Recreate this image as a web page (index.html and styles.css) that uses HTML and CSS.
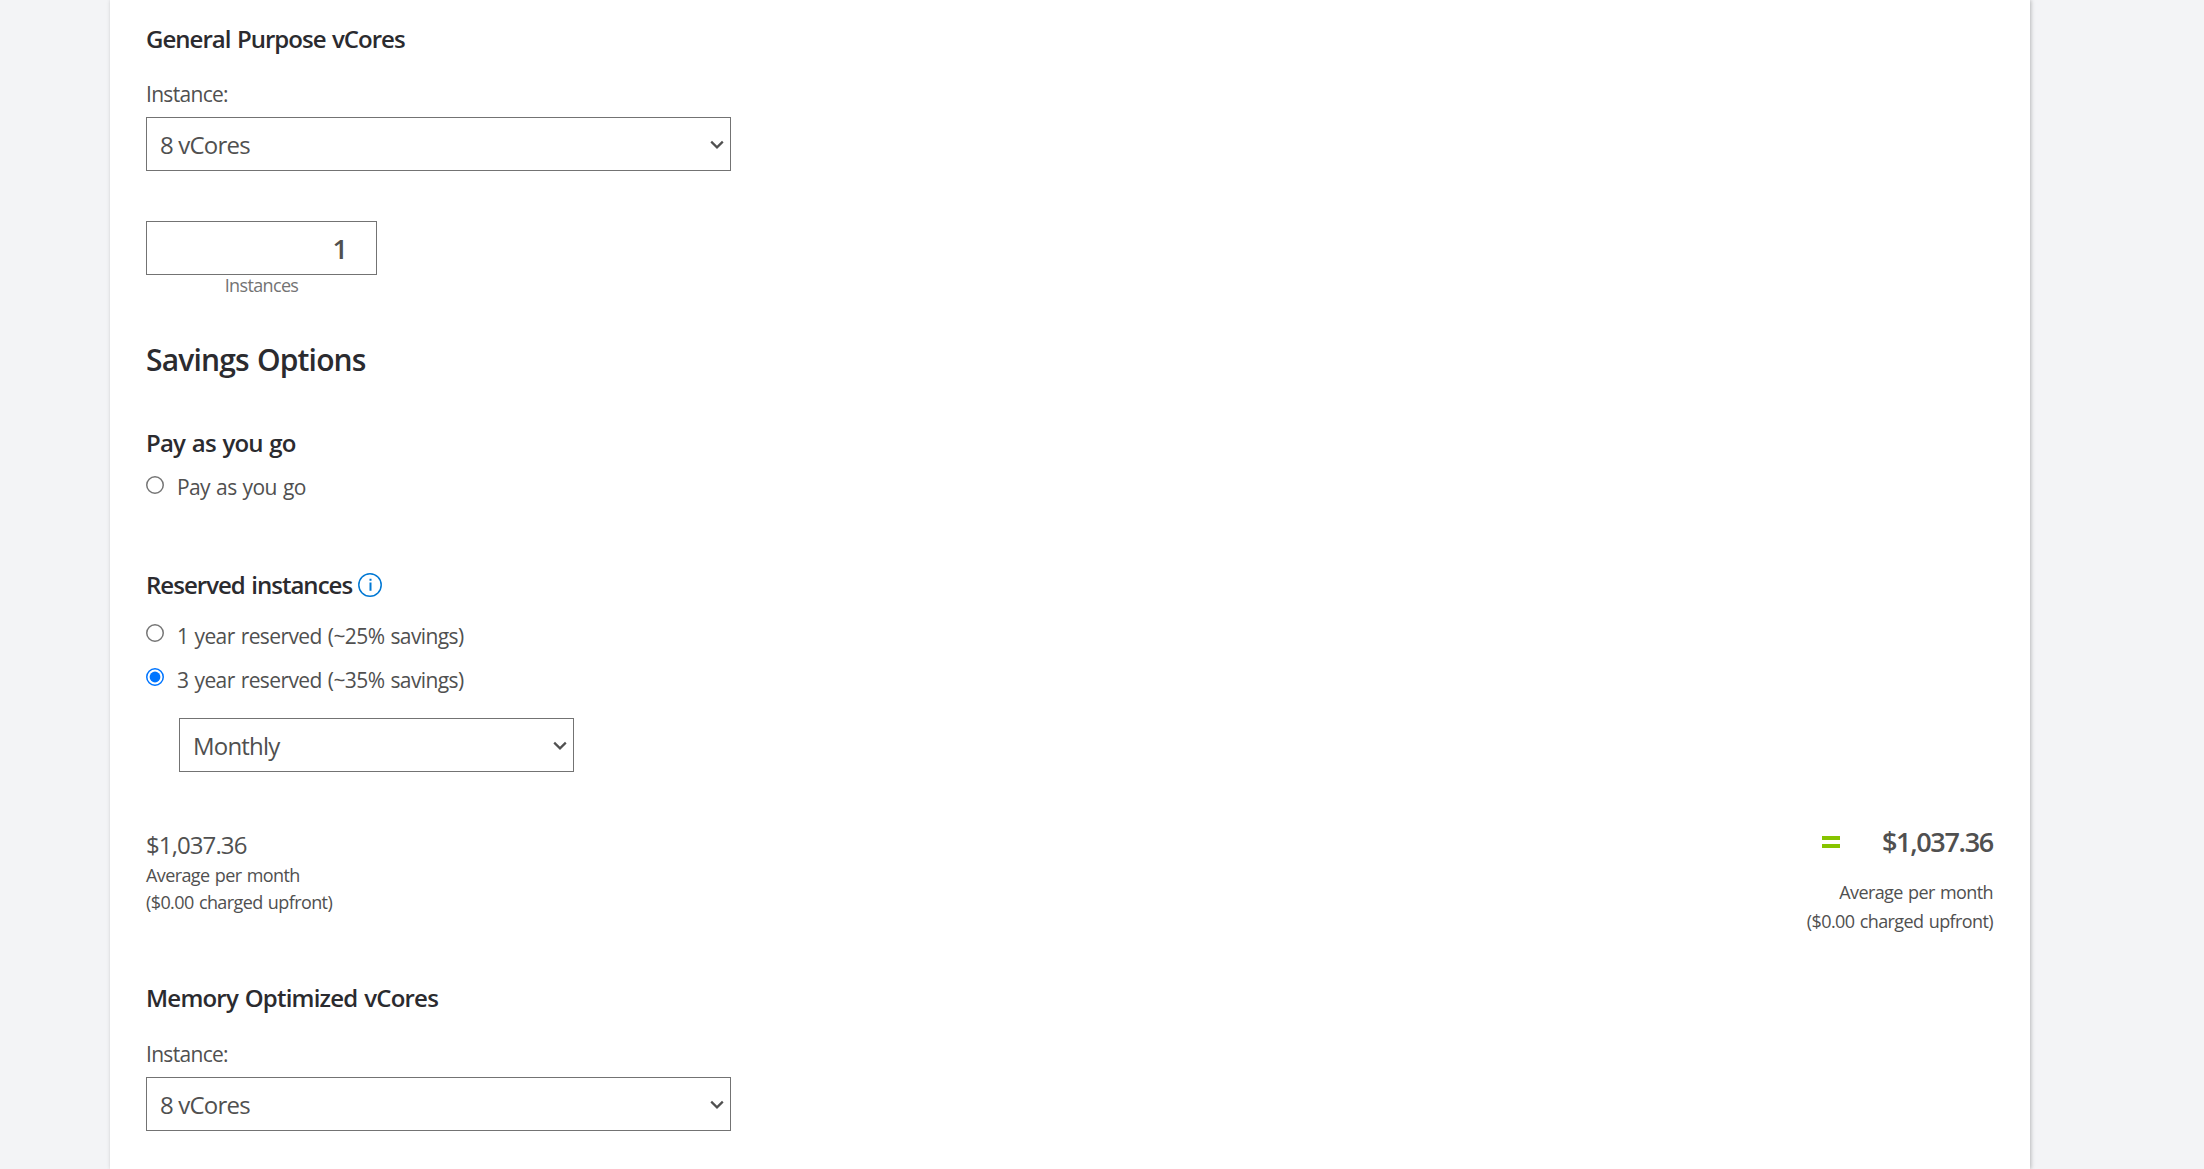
FILE: index.html
```html
<!DOCTYPE html>
<html lang="en">
<head>
    <meta charset="UTF-8">
    <meta name="viewport" content="width=device-width, initial-scale=1.0">
    <title>Pricing Calculator</title>
    <link rel="stylesheet" href="styles.css">
</head>
<body>
    <main class="panel">
        <section class="tier">
            <h3>General Purpose vCores</h3>
            <label class="field-label" for="gpInstance">Instance:</label>
            <div class="select-wrap">
                <select id="gpInstance">
                    <option>8 vCores</option>
                </select>
                <svg class="chevron" viewBox="0 0 14 10" fill="none" stroke="currentColor" stroke-width="2.2">
                    <path d="M1.2 1.6L7 7.4l5.8-5.8"></path>
                </svg>
            </div>

            <div class="quantity">
                <input type="text" id="gpCount" value="1" aria-label="Instances">
                <span class="caption">Instances</span>
            </div>

            <h2>Savings Options</h2>

            <div class="option-group payg">
                <h3>Pay as you go</h3>
                <label class="option">
                    <input type="radio" name="savings">
                    <span>Pay as you go</span>
                </label>
            </div>

            <div class="option-group reserved">
                <h3>
                    <span>Reserved instances</span>
                    <svg class="info" viewBox="0 0 24 24" fill="none" stroke="currentColor" stroke-width="1.5">
                        <circle cx="12" cy="12" r="11.2"></circle>
                        <path stroke-width="2" d="M12.5 9.5v8.3M12.5 5.8v2"></path>
                    </svg>
                </h3>
                <label class="option">
                    <input type="radio" name="savings">
                    <span>1 year reserved (~25% savings)</span>
                </label>
                <label class="option">
                    <input type="radio" name="savings" checked>
                    <span>3 year reserved (~35% savings)</span>
                </label>
                <div class="select-wrap billing">
                    <select id="billing" aria-label="Billing">
                        <option>Monthly</option>
                    </select>
                    <svg class="chevron" viewBox="0 0 14 10" fill="none" stroke="currentColor" stroke-width="2.2">
                        <path d="M1.2 1.6L7 7.4l5.8-5.8"></path>
                    </svg>
                </div>
            </div>

            <div class="summary">
                <div class="cost">
                    <div class="amount">$1,037.36</div>
                    <div class="note">Average per month</div>
                    <div class="note">($0.00 charged upfront)</div>
                </div>
                <div class="total">
                    <div class="total-row">
                        <svg class="equals" viewBox="0 0 18 12" fill="currentColor">
                            <rect width="18" height="4"></rect>
                            <rect y="8" width="18" height="4"></rect>
                        </svg>
                        <span class="total-amount">$1,037.36</span>
                    </div>
                    <div class="note">Average per month</div>
                    <div class="note">($0.00 charged upfront)</div>
                </div>
            </div>
        </section>

        <section class="tier memory">
            <h3>Memory Optimized vCores</h3>
            <label class="field-label" for="moInstance">Instance:</label>
            <div class="select-wrap">
                <select id="moInstance">
                    <option>8 vCores</option>
                </select>
                <svg class="chevron" viewBox="0 0 14 10" fill="none" stroke="currentColor" stroke-width="2.2">
                    <path d="M1.2 1.6L7 7.4l5.8-5.8"></path>
                </svg>
            </div>
        </section>
    </main>
</body>
</html>
```
FILE: styles.css
```css
* {
    margin: 0;
    padding: 0;
    box-sizing: border-box;
}

body {
    background-color: #f3f4f6;
    color: #505050;
    font-family: 'Segoe UI', 'Open Sans', sans-serif;
    font-size: 21px;
    line-height: 30px;
    height: 1169px;
    overflow: hidden;
}

.panel {
    width: 1920px;
    min-height: 1169px;
    margin-left: 110px;
    padding: 21px 37px 37px 36px;
    background-color: white;
    box-shadow: 1px 0 4px rgba(0, 0, 0, 0.25);
}

h2,
h3 {
    color: #2b2b2f;
    font-weight: 600;
}

h2 {
    margin-top: 45px;
    font-size: 30px;
    line-height: 40px;
    letter-spacing: -0.83px;
    word-spacing: 1.2px;
}

h3 {
    display: flex;
    align-items: center;
    font-size: 24px;
    line-height: 36px;
    letter-spacing: -0.98px;
    word-spacing: 1.2px;
}

.memory h3 {
    letter-spacing: -0.78px;
}

.field-label {
    display: block;
    margin: 22px 0 8px;
    letter-spacing: -0.69px;
}

.memory .field-label {
    margin-top: 23px;
}

.select-wrap {
    position: relative;
    width: 585px;
}

select {
    display: block;
    width: 100%;
    height: 54px;
    padding: 1px 40px 0 13px;
    border: 1px solid #737373;
    border-radius: 0;
    background-color: white;
    color: #505050;
    font-family: inherit;
    font-size: 24px;
    letter-spacing: -0.8px;
    appearance: none;
}

.chevron {
    position: absolute;
    top: 23px;
    right: 7px;
    width: 14px;
    height: 10px;
    pointer-events: none;
}

.quantity {
    display: flex;
    flex-direction: column;
    width: 231px;
    margin-top: 50px;
}

.quantity input {
    height: 54px;
    padding: 1px 28px 0 0;
    border: 1px solid #737373;
    color: #505050;
    font-family: inherit;
    font-size: 27px;
    font-weight: 600;
    text-align: right;
}

.caption {
    color: #737373;
    font-size: 18px;
    line-height: 20px;
    letter-spacing: -0.65px;
    text-align: center;
}

.option-group {
    margin-top: 45px;
}

.payg h3 {
    letter-spacing: -0.8px;
}

.option {
    display: flex;
    align-items: flex-start;
    gap: 13px;
    margin-top: 11px;
    letter-spacing: -0.6px;
    word-spacing: 1.2px;
}

.option input {
    width: 12px;
    height: 12px;
    margin-top: 2.67px;
    zoom: 1.5;
}

.reserved {
    margin-top: 65px;
}

.reserved .option {
    margin-top: 12px;
    line-height: 32px;
}

.reserved h3 {
    margin-bottom: 17px;
}

.reserved h3 + .option {
    margin-top: 0;
}

.info {
    width: 24px;
    height: 24px;
    margin-left: 6px;
    color: #0078d4;
}

.billing {
    width: 395px;
    margin: 22px 0 0 33px;
}

.summary {
    display: flex;
    justify-content: space-between;
    margin: 50px 0 44px;
}

.cost {
    padding-top: 6px;
}

.amount {
    font-size: 24px;
    line-height: 34px;
    letter-spacing: -0.9px;
}

.note {
    font-size: 18px;
    line-height: 27px;
    letter-spacing: -0.6px;
    word-spacing: 1.2px;
}

.total {
    text-align: right;
}

.total-row {
    display: flex;
    align-items: center;
    justify-content: flex-end;
    gap: 42px;
    margin-bottom: 16px;
}

.equals {
    width: 18px;
    height: 12px;
    color: #86c400;
}

.total-amount {
    font-size: 27px;
    font-weight: 600;
    line-height: 40px;
    letter-spacing: -1.3px;
}

.total .note {
    line-height: 29px;
}
```
